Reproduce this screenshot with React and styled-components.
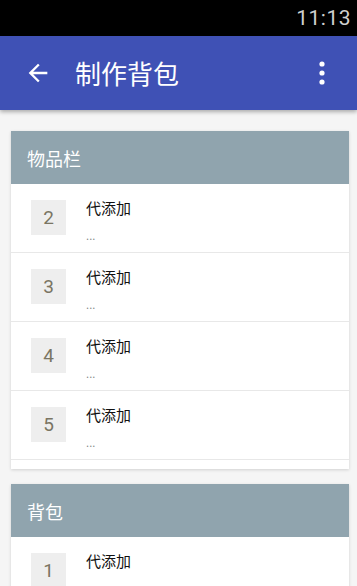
import React from 'react'
import styled, { createGlobalStyle } from 'styled-components'

const GlobalStyle = createGlobalStyle`
  html, body {
    margin: 0;
    padding: 0;
    background: #f5f5f5;
    font-family: Roboto, "Noto Sans CJK SC", sans-serif;
  }
  #root {
    width: 357px;
    height: 586px;
    overflow: hidden;
  }
`

const Screen = styled.div`
  width: 357px;
  height: 586px;
  overflow: hidden;
  background: #f5f5f5;
`

const StatusBar = styled.div`
  height: 36px;
  background: #000;
  display: flex;
  align-items: center;
  justify-content: flex-end;
  padding-right: 6px;
  color: #d0d0d0;
  font-family: Roboto, sans-serif;
  font-size: 21px;
  letter-spacing: 0.5px;
`

const AppBar = styled.div`
  height: 74px;
  background: #3f51b5;
  display: flex;
  align-items: center;
  padding: 0 31px 0 24px;
  box-shadow: 0 2px 4px rgba(0, 0, 0, 0.3);
  position: relative;
  z-index: 1;
`

const Title = styled.div`
  flex: 1;
  margin-left: 23px;
  color: #fff;
  font-family: "Noto Sans CJK SC", sans-serif;
  font-size: 26px;
  line-height: 1;
`

const IconButton = styled.div`
  display: flex;
  align-items: center;
  justify-content: center;
`

const Content = styled.div`
  padding: 21px 8px 0 11px;
  display: flex;
  flex-direction: column;
  gap: 15px;
`

const Card = styled.div`
  background: #fff;
  box-shadow: 0 1px 3px rgba(0, 0, 0, 0.15);
  padding-bottom: 9px;
`

const CardHeader = styled.div`
  height: 53px;
  background: #90a4ae;
  display: flex;
  align-items: center;
  padding-left: 16px;
  color: #fff;
  font-family: "Noto Sans CJK SC", sans-serif;
  font-size: 18px;
`

const Row = styled.div`
  border-bottom: 1px solid #e8e8e8;
  display: flex;
  align-items: flex-start;
  padding: 16px 0 0 20px;
  box-sizing: content-box;
  height: 52px;
`

const NumberBox = styled.div`
  width: 35px;
  height: 35px;
  background: #eeeeee;
  display: flex;
  align-items: center;
  justify-content: center;
  color: #7a7563;
  font-family: Roboto, sans-serif;
  font-size: 19px;
`

const RowText = styled.div`
  margin-left: 20px;
  display: flex;
  flex-direction: column;
  margin-top: -2px;
`

const RowTitle = styled.div`
  color: #111;
  font-family: "Noto Sans CJK SC", sans-serif;
  font-size: 15px;
  line-height: 20px;
`

const RowSub = styled.div`
  color: #888;
  font-family: Roboto, sans-serif;
  font-size: 12px;
  line-height: 14px;
  margin-top: 11px;
`

const ItemRow = ({ n }) => (
  <Row>
    <NumberBox>{n}</NumberBox>
    <RowText>
      <RowTitle>代添加</RowTitle>
      <RowSub>...</RowSub>
    </RowText>
  </Row>
)

const App = () => (
  <Screen>
    <GlobalStyle />
    <StatusBar>11:13</StatusBar>
    <AppBar>
      <IconButton>
        <svg width="28" height="28" viewBox="0 0 24 24">
          <path d="M20 11H7.83l5.59-5.59L12 4l-8 8 8 8 1.41-1.41L7.83 13H20v-2z" fill="#fff" />
        </svg>
      </IconButton>
      <Title>制作背包</Title>
      <IconButton>
        <svg width="8" height="26" viewBox="0 0 8 26">
          <circle cx="4" cy="4" r="2.6" fill="#fff" />
          <circle cx="4" cy="13" r="2.6" fill="#fff" />
          <circle cx="4" cy="22" r="2.6" fill="#fff" />
        </svg>
      </IconButton>
    </AppBar>
    <Content>
      <Card>
        <CardHeader>物品栏</CardHeader>
        {[2, 3, 4, 5].map((n) => (
          <ItemRow key={n} n={n} />
        ))}
      </Card>
      <Card>
        <CardHeader>背包</CardHeader>
        <ItemRow n={1} />
        <ItemRow n={2} />
      </Card>
    </Content>
  </Screen>
)

export default App
